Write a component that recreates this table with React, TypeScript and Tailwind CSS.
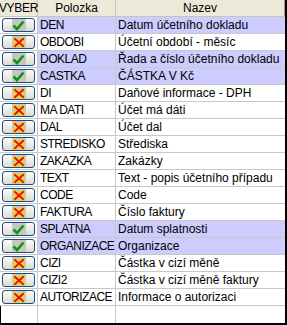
import React from 'react';

type Row = { code: string; name: string; on: boolean };

const rows: Row[] = [
  { code: 'DEN', name: 'Datum účetního dokladu', on: true },
  { code: 'OBDOBI', name: 'Účetní období - měsíc', on: false },
  { code: 'DOKLAD', name: 'Řada a číslo účetního dokladu', on: true },
  { code: 'CASTKA', name: 'ČÁSTKA V Kč', on: true },
  { code: 'DI', name: 'Daňové informace - DPH', on: false },
  { code: 'MA DATI', name: 'Účet má dáti', on: false },
  { code: 'DAL', name: 'Účet dal', on: false },
  { code: 'STREDISKO', name: 'Střediska', on: false },
  { code: 'ZAKAZKA', name: 'Zakázky', on: false },
  { code: 'TEXT', name: 'Text - popis účetního případu', on: false },
  { code: 'CODE', name: 'Code', on: false },
  { code: 'FAKTURA', name: 'Číslo faktury', on: false },
  { code: 'SPLATNA', name: 'Datum splatnosti', on: true },
  { code: 'ORGANIZACE', name: 'Organizace', on: true },
  { code: 'CIZI', name: 'Částka v cizí měně', on: false },
  { code: 'CIZI2', name: 'Částka v cizí měně faktury', on: false },
  { code: 'AUTORIZACE', name: 'Informace o autorizaci', on: false },
];

function Check() {
  return (
    <svg width="13" height="11" viewBox="0 0 13 11">
      <path d="M1.5 5.5 L5 9 L11.5 1.5" fill="none" stroke="#089808" strokeWidth="2.6" />
    </svg>
  );
}

function Cross() {
  return (
    <svg width="12" height="11" viewBox="0 0 12 11">
      <g stroke="#f4e000" strokeWidth="4" strokeLinecap="square">
        <path d="M2 2 L10 9 M10 2 L2 9" />
      </g>
      <g stroke="#e81010" strokeWidth="2" strokeLinecap="square">
        <path d="M2 2 L10 9 M10 2 L2 9" />
      </g>
    </svg>
  );
}

function Toggle({ on }: { on: boolean }) {
  return (
    <div className="w-[33px] h-[14px] rounded-[3px] border border-[#1c4f86] bg-gradient-to-b from-[#fbfbf9] to-[#dedcd2] flex items-center justify-center">
      <div className="w-[14px] h-[12px] bg-[#c6c6c6] flex items-center justify-center">
        {on ? <Check /> : <Cross />}
      </div>
    </div>
  );
}

export default function App() {
  return (
    <div className="w-[287px] h-[325px] bg-white overflow-hidden text-[12px] text-black" style={{ fontFamily: '"Liberation Sans", Arial, sans-serif' }}>
      <div className="w-[287px] h-[325px] border-r-2 border-b-2 border-black flex flex-col">
        {/* header */}
        <div className="flex h-[17px] bg-[#ece9d8] border-b border-[#c9c6b8] shrink-0">
          <div className="w-[38px] flex items-center justify-center border-r border-[#c9c6b8] whitespace-nowrap tracking-[-0.3px]">VYBER</div>
          <div className="w-[78px] flex items-center justify-center border-r border-[#c9c6b8]">Polozka</div>
          <div className="flex-1 flex items-center justify-center border-r border-[#9d9a8c]">Nazev</div>
        </div>
        {rows.map((r) => (
          <div key={r.code} className={`flex h-[17px] border-b border-[#c8c8c8] shrink-0 ${r.on ? 'bg-[#ccccff]' : 'bg-white'}`}>
            <div className="w-[38px] flex items-center justify-center border-r border-[#c8c8c8] bg-white">
              <Toggle on={r.on} />
            </div>
            <div className="w-[78px] flex items-center pl-[2px] border-r border-[#c8c8c8] whitespace-nowrap overflow-hidden tracking-[-0.5px]">{r.code}</div>
            <div className="flex-1 flex items-center pl-[2px] whitespace-nowrap overflow-hidden">{r.name}</div>
          </div>
        ))}
        <div className="flex flex-1 border-l border-black">
          <div className="w-[37px] border-r border-[#c8c8c8]" />
          <div className="w-[78px] border-r border-[#c8c8c8]" />
          <div className="flex-1" />
        </div>
      </div>
    </div>
  );
}
